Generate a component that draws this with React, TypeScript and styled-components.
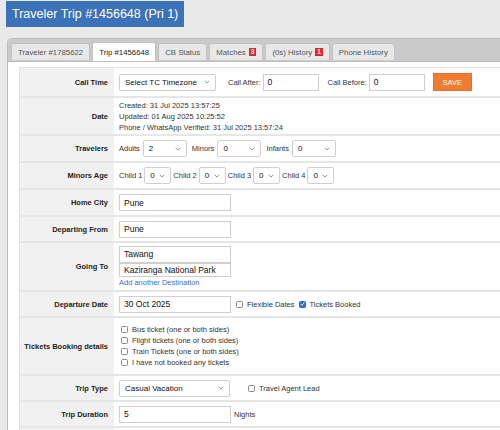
import React, { FC } from 'react';
import styled, { createGlobalStyle } from 'styled-components';

const GlobalStyle = createGlobalStyle`
  html, body {
    margin: 0;
    padding: 0;
    background: #e9e9e9;
    overflow: hidden;
    font-family: 'Liberation Sans', Arial, sans-serif;
    color: #222;
  }
`;

const Page = styled.div`
  padding: 1px 0 0 6px;
  width: 540px;
`;

const TitleBox = styled.h1`
  display: inline-block;
  margin: 0;
  background: #3b72b9;
  color: #fff;
  font-weight: normal;
  font-size: 12.5px;
  line-height: 26px;
  padding: 0 6px 0 6px;
  height: 26px;
`;

const TabsWrap = styled.div`
  margin: 11px 0 0 1px;
  border: 1px solid #bdbdbd;
  border-radius: 4px;
  background: #fff;
  overflow: hidden;
`;

const TabBar = styled.div`
  display: flex;
  gap: 2px;
  background: #cacaca;
  padding: 4px 3px 0;
  height: 18px;
  border-bottom: 1px solid #bdbdbd;
`;

const Tab = styled.div<{ $active?: boolean }>`
  display: flex;
  align-items: center;
  gap: 3px;
  padding: 0 6px;
  font-size: 7.8px;
  color: ${(p) => (p.$active ? '#222' : '#555')};
  background: ${(p) => (p.$active ? '#fff' : '#e8e8e8')};
  border: 1px solid #c2c2c2;
  border-bottom: none;
  border-radius: 3px 3px 0 0;
  height: ${(p) => (p.$active ? '18px' : '16px')};
  margin-top: ${(p) => (p.$active ? '-1px' : '0')};
  margin-bottom: ${(p) => (p.$active ? '-2px' : '0')};
`;

const Badge = styled.span`
  background: #e52424;
  color: #fff;
  font-size: 6.5px;
  font-weight: bold;
  line-height: 8px;
  padding: 0 2px;
`;

const Panel = styled.div`
  padding: 5px 0 0 11px;
`;

const Form = styled.div`
  border: 1px solid #e2e2e2;
  border-right: none;
`;

const Row = styled.div<{ $h: number }>`
  display: grid;
  grid-template-columns: 94px 1fr;
  min-height: ${(p) => p.$h}px;
  border-bottom: 2px solid #e6e6e6;
`;

const Label = styled.div`
  background: #f1f1f1;
  display: flex;
  align-items: center;
  justify-content: flex-end;
  padding-right: 6px;
  font-size: 7.5px;
  font-weight: bold;
  color: #222;
  text-align: right;
`;

const Value = styled.div<{ $gap?: number }>`
  display: flex;
  align-items: center;
  gap: ${(p) => p.$gap ?? 4}px;
  padding: 0 5px;
  font-size: 7.5px;
  color: #333;
`;

const Stack = styled.div<{ $ml?: number }>`
  display: flex;
  flex-direction: column;
  margin-left: ${(p) => p.$ml ?? 0}px;
`;

const Text = styled.span<{ $ml?: number }>`
  font-size: 7.5px;
  line-height: 11px;
  color: #333;
  margin-left: ${(p) => p.$ml ?? 0}px;
  white-space: nowrap;
`;

const Input = styled.div<{ $w: number; $h?: number }>`
  box-sizing: border-box;
  width: ${(p) => p.$w}px;
  height: ${(p) => p.$h ?? 17}px;
  border: 1px solid #cfcfcf;
  background: #fff;
  padding: 0 4px;
  display: flex;
  align-items: center;
  font-size: 8.5px;
  color: #111;
  white-space: nowrap;
`;

const SelectBox = styled.div<{ $w: number }>`
  box-sizing: border-box;
  width: ${(p) => p.$w}px;
  height: 17px;
  border: 1px solid #cfcfcf;
  border-radius: 2px;
  background: #fff;
  padding: 0 5px 0 5px;
  display: flex;
  align-items: center;
  justify-content: space-between;
  font-size: 8px;
  color: #111;
  white-space: nowrap;
`;

const SaveButton = styled.button`
  box-sizing: border-box;
  height: 18px;
  width: 39px;
  border: 1px solid #e86f25;
  background: #f07b32;
  color: #fff;
  font-family: inherit;
  font-size: 7.5px;
  padding: 0;
  margin-left: 6px;
`;

const Box = styled.span<{ $checked?: boolean }>`
  box-sizing: border-box;
  width: 7px;
  height: 7px;
  border: 1px solid ${(p) => (p.$checked ? '#2f6fd6' : '#8a8a8a')};
  border-radius: 1.5px;
  background: ${(p) => (p.$checked ? '#2f6fd6' : '#fff')};
  display: inline-flex;
  align-items: center;
  justify-content: center;
  flex-shrink: 0;
`;

const CheckLine = styled.label<{ $ml?: number }>`
  display: flex;
  align-items: center;
  gap: 4px;
  font-size: 7.5px;
  color: #333;
  height: 11px;
  white-space: nowrap;
  margin-left: ${(p) => p.$ml ?? 0}px;
`;

const LinkText = styled.a`
  font-size: 7.5px;
  color: #3a6fc8;
  text-decoration: none;
  line-height: 11px;
`;

const Chevron: FC = () => (
  <svg width="6" height="4" viewBox="0 0 6 4">
    <path d="M0.7 0.8 L3 3.1 L5.3 0.8" fill="none" stroke="#777" strokeWidth="0.8" />
  </svg>
);

const Select: FC<{ w: number; value: string }> = ({ w, value }) => (
  <SelectBox $w={w}>
    <span>{value}</span>
    <Chevron />
  </SelectBox>
);

const Check: FC<{ checked?: boolean; label: string; ml?: number }> = ({ checked, label, ml }) => (
  <CheckLine $ml={ml}>
    <Box $checked={checked}>
      {checked && (
        <svg width="6" height="6" viewBox="0 0 6 6">
          <path d="M1 3.2 L2.4 4.6 L5 1.3" fill="none" stroke="#fff" strokeWidth="1.1" />
        </svg>
      )}
    </Box>
    {label}
  </CheckLine>
);

const tabs = [
  { name: 'Traveler #1785622' },
  { name: 'Trip #1456648', active: true },
  { name: 'CB Status' },
  { name: 'Matches', badge: '3' },
  { name: '(0s) History', badge: '1' },
  { name: 'Phone History' },
];

const App: FC = () => (
  <Page>
    <GlobalStyle />
    <TitleBox>Traveler Trip #1456648 (Pri 1)</TitleBox>
    <TabsWrap>
      <TabBar>
        {tabs.map((t) => (
          <Tab key={t.name} $active={t.active}>
            {t.name}
            {t.badge && <Badge>{t.badge}</Badge>}
          </Tab>
        ))}
      </TabBar>
      <Panel>
        <Form>
          <Row $h={28}>
            <Label>Call Time</Label>
            <Value $gap={2}>
              <Select w={97} value="Select TC Timezone" />
              <Text $ml={10}>Call After:</Text>
              <Input $w={56}>0</Input>
              <Text $ml={7}>Call Before:</Text>
              <Input $w={56}>0</Input>
              <SaveButton>SAVE</SaveButton>
            </Value>
          </Row>
          <Row $h={36}>
            <Label>Date</Label>
            <Value>
              <Stack>
                <Text>Created: 31 Jul 2025 13:57:25</Text>
                <Text>Updated: 01 Aug 2025 10:25:52</Text>
                <Text>Phone / WhatsApp Verified: 31 Jul 2025 13:57:24</Text>
              </Stack>
            </Value>
          </Row>
          <Row $h={25}>
            <Label>Travelers</Label>
            <Value $gap={3}>
              <Text>Adults</Text>
              <Select w={44} value="2" />
              <Text $ml={2}>Minors</Text>
              <Select w={44} value="0" />
              <Text $ml={2}>Infants</Text>
              <Select w={44} value="0" />
            </Value>
          </Row>
          <Row $h={25}>
            <Label>Minors Age</Label>
            <Value $gap={2}>
              {[1, 2, 3, 4].map((n) => (
                <React.Fragment key={n}>
                  <Text>Child {n}</Text>
                  <Select w={27} value="0" />
                </React.Fragment>
              ))}
            </Value>
          </Row>
          <Row $h={25}>
            <Label>Home City</Label>
            <Value>
              <Input $w={112}>Pune</Input>
            </Value>
          </Row>
          <Row $h={24}>
            <Label>Departing From</Label>
            <Value>
              <Input $w={112}>Pune</Input>
            </Value>
          </Row>
          <Row $h={47}>
            <Label>Going To</Label>
            <Value>
              <Stack>
                <Input $w={112}>Tawang</Input>
                <Input $w={112} $h={14}>Kaziranga National Park</Input>
                <LinkText href="#">Add another Destination</LinkText>
              </Stack>
            </Value>
          </Row>
          <Row $h={24}>
            <Label>Departure Date</Label>
            <Value>
              <Input $w={112}>30 Oct 2025</Input>
              <Check ml={1} label="Flexible Dates" />
              <Check checked label="Tickets Booked" />
            </Value>
          </Row>
          <Row $h={56}>
            <Label>Tickets Booking details</Label>
            <Value>
              <Stack $ml={2}>
                <Check label="Bus ticket (one or both sides)" />
                <Check label="Flight tickets (one or both sides)" />
                <Check label="Train Tickets (one or both sides)" />
                <Check label="I have not booked any tickets" />
              </Stack>
            </Value>
          </Row>
          <Row $h={24}>
            <Label>Trip Type</Label>
            <Value>
              <Select w={111} value="Casual Vacation" />
              <Check ml={14} label="Travel Agent Lead" />
            </Value>
          </Row>
          <Row $h={24}>
            <Label>Trip Duration</Label>
            <Value $gap={3}>
              <Input $w={112}>5</Input>
              <Text>Nights</Text>
            </Value>
          </Row>
          <Row $h={24}>
            <Label />
            <Value />
          </Row>
        </Form>
      </Panel>
    </TabsWrap>
  </Page>
);

export default App;
